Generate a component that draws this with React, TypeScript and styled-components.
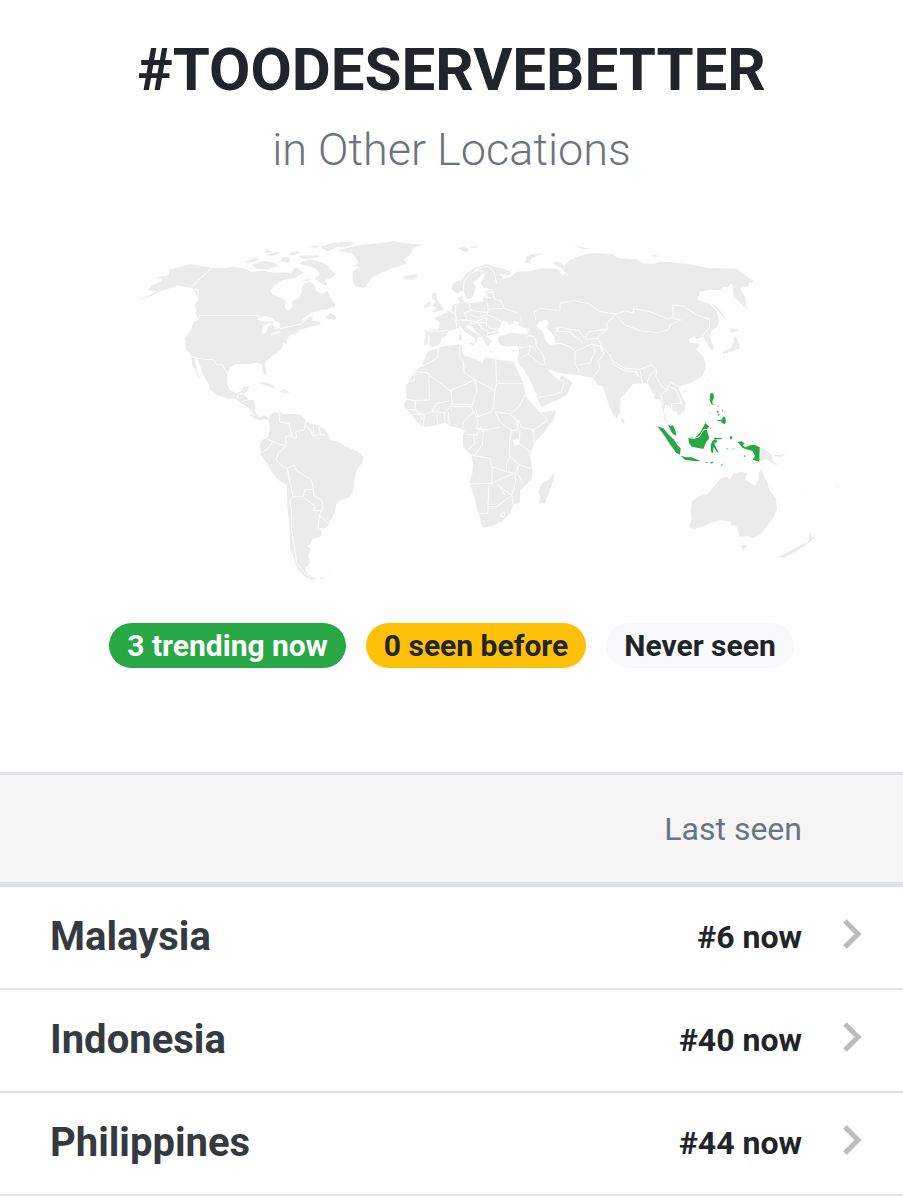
import styled, { createGlobalStyle } from "styled-components"

const GlobalStyle = createGlobalStyle`
	body {
		margin: 0;
		background: #fff;
		color: #212529;
		font-family: Roboto, "Liberation Sans", sans-serif;
	}
`

const Page = styled.main`
	width: 100%;
	overflow: hidden;
`

const Header = styled.header`
	padding-top: 33px;
	text-align: center;
`

const Title = styled.h1`
	margin: 0;
	font-size: 60px;
	line-height: 74px;
	font-weight: 700;
`

const Subtitle = styled.h2`
	margin: 16px 0 0;
	font-size: 45px;
	line-height: 54px;
	font-weight: 300;
	color: #6c757d;
`

const MapImage = styled.svg`
	display: block;
	width: 100%;
	margin-top: 43px;
`

const Legend = styled.div`
	display: flex;
	justify-content: center;
	gap: 20px;
	padding: 33px 0 104px;
`

const tones = {
	now: { background: "#28a745", color: "#fff" },
	before: { background: "#ffc107", color: "#212529" },
	never: { background: "#f8f9fa", color: "#212529" },
}

const Badge = styled.span<{ $tone: keyof typeof tones }>`
	padding: 0 18px;
	border-radius: 24px;
	font-size: 30px;
	line-height: 45px;
	font-weight: 700;
	white-space: nowrap;
	background: ${(props) => tones[props.$tone].background};
	color: ${(props) => tones[props.$tone].color};
`

const Table = styled.table`
	width: 100%;
	border-spacing: 0;
	border-top: 3px solid #dee2e6;
`

const HeadCell = styled.th`
	padding: 30px 0 29px;
	border-bottom: 5px solid #dee2e6;
	background: #f5f5f5;
	color: #6c757d;
	font-size: 32px;
	line-height: 48px;
	font-weight: 400;
	text-align: right;
`

const Cell = styled.td`
	padding: 26px 0 27px;
	border-bottom: 2px solid #dee2e6;
	line-height: 48px;
	vertical-align: middle;
`

const NameCell = styled(Cell)`
	padding-left: 50px;
`

const RankCell = styled(Cell)`
	font-size: 32px;
	font-weight: 700;
	text-align: right;
	white-space: nowrap;
`

const ArrowCell = styled(Cell)`
	width: 60px;
	padding: 32px 41px 39px 0;
`

const CountryLink = styled.a`
	display: block;
	color: #343a40;
	font-size: 40px;
	font-weight: 700;
	text-decoration: none;
`

const Chevron = styled.svg`
	display: block;
	margin-left: auto;
	fill: none;
	stroke: #bcbcbc;
	stroke-width: 5;
`

const Land = styled.path`
	fill: #ebebeb;
`

const Water = styled.path`
	fill: #fff;
`

const Border = styled.path`
	fill: none;
	stroke: #fff;
	stroke-width: 3;
	stroke-linejoin: round;
`

const Trending = styled.path`
	fill: #28a745;
`

const NorthAmerica = () => (
	<g transform="translate(90 230) scale(.33333)">
		<Land d="M172,180 L187,165 212,155 218,148 198,141 228,138 238,132 236,120 270,110 303,103 332,108 366,113 400,115 432,110 462,115 485,125 522,122 550,128 585,128 605,130 612,116 622,112 632,120 640,128 622,140 605,146 580,150 555,165 542,180 546,193 578,206 588,216 584,232 594,240 602,238 607,228 606,214 628,202 636,182 634,172 645,160 660,156 675,168 678,182 695,192 712,182 718,198 735,222 734,230 712,238 680,242 660,252 640,265 632,275 655,262 668,258 665,272 692,276 690,284 660,290 640,297 622,302 620,310 600,316 590,330 588,345 580,336 578,350 573,360 545,380 528,393 524,405 530,425 526,437 518,425 515,404 500,398 470,403 440,402 420,412 412,430 410,460 420,480 440,490 455,482 460,470 478,468 470,485 460,492 475,507 492,510 495,540 498,550 510,560 525,556 537,565 532,570 515,565 500,560 485,548 472,530 450,518 432,505 415,507 380,495 358,478 358,465 345,445 335,422 324,390 313,388 322,420 332,452 323,440 318,420 308,412 304,385 302,373 288,358 285,325 303,298 312,275 326,268 316,250 320,240 313,225 322,212 316,185 300,172 280,170 262,165 240,175 215,182 190,196 145,209 180,194 200,184Z" />
		<Land d="M463,96 L500,82 510,88 490,96Z M485,105 L520,92 555,100 565,108 535,118 500,116Z M525,75 L560,65 575,70 545,78Z M570,92 L580,80 600,85 595,100Z M590,72 L620,62 632,70 610,76Z M625,78 L685,76 690,82 640,86Z M655,50 L685,46 680,54Z M630,98 L660,88 690,95 712,105 722,120 738,132 725,145 706,150 712,168 695,162 675,148 688,132 680,118 660,108 635,106Z M690,50 L730,38 780,36 780,45 740,52 712,64Z M705,265 L722,248 740,262 735,270Z M642,152 L655,146 658,154Z M505,458 L525,455 560,472 545,474Z M568,483 L585,478 600,488 575,488Z M20,479 L24,480 22,484Z M530,58 L548,66 525,70Z" />
		<Water d="M500,268 L522,258 548,264 552,272 522,275Z M514,312 L518,290 536,278 548,285 534,290 528,308Z M549,270 L568,278 572,292 558,298 548,285Z M542,312 L568,302 572,307 545,316Z" />
		<Border d="M366,113 L300,175 325,180 322,215 M326,256 L500,256 540,275 572,295 632,282 655,262 M302,380 L340,388 370,388 382,405 395,402 412,430 M440,505 L448,490 460,492 M455,515 L478,508 492,510 M480,538 L497,538" />
	</g>
)

const SouthAmerica = () => (
	<g transform="translate(250 400) scale(.33333)">
		<Land d="M55,60 L60,45 75,36 85,40 90,33 100,42 130,42 150,43 165,58 180,72 205,76 225,88 235,105 240,120 270,128 290,140 325,155 340,170 338,188 320,210 313,240 308,275 298,292 268,302 258,315 255,335 242,360 232,380 218,386 205,382 214,392 215,408 188,416 182,432 170,438 180,445 175,470 182,485 170,500 165,510 175,522 200,538 185,540 165,530 145,510 135,485 125,455 120,440 118,380 112,310 110,255 85,240 68,220 45,180 30,165 33,150 28,140 35,120 55,110 60,80Z M0,0 L12,0 15,28 0,32Z M2,42 L15,48 30,55 42,48 56,62 45,56 30,61 12,54 0,46Z M208,534 L218,530 216,536Z M232,518 L240,513 236,518Z" />
		<Border d="M90,36 L88,65 118,72 125,105 107,110 108,138 80,130 48,115 M35,158 L55,145 68,125 M118,108 L140,115 138,95 162,90 170,60 M165,78 L182,90 188,108 210,103 228,106 M190,78 L190,105 M207,80 L212,104 M108,138 L85,160 78,180 100,200 112,205 M112,205 L133,195 140,212 185,240 190,265 M112,205 L118,240 130,290 120,300 125,340 125,390 135,450 140,490 165,520 180,530 M130,290 L158,290 165,270 190,268 192,288 215,300 220,322 208,345 204,385 M158,290 L195,318 192,332 214,332 M208,345 L236,370" />
	</g>
)

const Europe = () => (
	<g transform="translate(340 230) scale(.33333)">
		<Land d="M0,35 L45,38 20,50 0,50Z M-10,60 L20,55 45,47 100,41 160,34 215,42 250,43 222,55 210,75 190,88 200,100 178,108 150,118 125,128 105,138 90,148 78,170 70,174 45,167 38,150 38,125 58,112 40,107 55,100 48,85 35,70 10,66Z M188,138 L205,136 230,132 233,142 215,150 195,147Z M355,55 L372,51 388,58 378,68Z M385,50 L415,48 405,54Z M555,95 L560,80 575,73 608,68 578,80 568,90 574,104Z" />
		<Land d="M335,180 L337,160 365,150 380,130 405,113 440,102 462,110 470,150 460,172 432,174 422,160 435,138 430,128 410,150 400,158 408,172 400,195 390,208 380,206 370,182 350,190Z" />
		<Land d="M275,192 L284,188 292,195 290,208 302,225 313,236 300,244 276,246 290,234 278,228 286,212 276,205Z M253,226 L262,217 272,216 268,230 253,235Z" />
		<Land d="M462,110 L485,115 512,125 508,135 480,132 490,148 515,140 530,126 560,125 600,118 640,115 660,120 660,280 620,275 600,285 605,305 622,320 625,360 660,420 600,420 540,385 537,355 530,347 500,350 480,344 472,325 484,316 468,310 452,316 440,320 456,332 445,350 434,338 425,318 405,300 390,284 376,288 400,307 428,320 414,322 408,340 403,324 375,305 362,290 350,298 325,302 320,315 305,325 300,342 275,352 264,344 250,344 258,312 252,300 296,298 300,278 282,263 300,258 320,245 335,238 335,228 345,222 360,220 352,205 366,196 370,215 395,220 430,214 427,198 443,196 430,184 460,180 440,174Z M385,338 L403,340 400,348Z M355,315 L364,313 366,330 358,332Z M358,300 L363,298 363,310Z M448,362 L465,365 450,368Z M515,362 L526,358 520,366Z M358,212 L372,208 372,216Z" />
		<Water d="M476,314 L474,300 484,282 490,272 502,276 508,284 524,280 518,272 536,276 534,284 552,292 566,306 560,314 530,310 512,307 494,316Z" />
		<Border d="M370,182 L372,155 392,132 410,120 430,125 M405,118 L428,112 445,108 462,125 470,160 M430,185 L458,188 M428,200 L455,204 M458,182 L462,205 485,215 492,235 540,250 545,275 M445,238 L490,235 M440,215 L445,238 440,255 465,262 485,275 M388,220 L392,242 445,248 M392,242 L372,248 382,268 345,272 M348,225 L345,245 350,268 M325,240 L348,255 350,298 M258,302 L300,304 325,300 M260,312 L268,322 264,345 M365,270 L410,275 435,262 440,265 M390,255 L412,262 438,255 M385,282 L415,278 425,295 445,305 440,320 M415,278 L440,278 450,295 478,298 M440,262 L440,290 M445,310 L470,305 M560,295 L595,305 612,318 M565,315 L585,318 590,335 M580,318 L600,330 M535,352 L575,345 590,335 600,370 620,400 M540,385 L565,370 575,345 M565,370 L600,395 640,405" />
	</g>
)

const Africa = () => (
	<g transform="translate(395 340) scale(.33333)">
		<Land d="M95,40 L105,30 120,28 150,18 190,14 206,18 200,30 206,45 235,55 262,68 272,52 300,58 330,62 355,65 370,95 385,130 392,165 410,185 428,208 440,217 484,210 478,235 450,275 418,308 405,345 412,390 410,420 375,450 375,485 355,495 345,520 320,545 290,558 265,563 258,555 255,530 245,510 238,470 222,430 232,400 235,375 228,345 205,320 203,285 210,272 190,264 165,258 150,248 125,255 90,262 70,250 50,225 30,205 28,190 35,178 33,135 60,95 80,78Z M475,400 L478,415 450,490 432,490 436,470 430,455 440,430 460,420Z" />
		<Water d="M355,300 L370,298 375,312 358,318Z" />
		<Border d="M80,78 L105,68 128,52 130,28 M60,95 L95,98 165,152 240,120 208,98 205,65 192,45 195,15 M60,98 L58,120 35,130 M102,108 L103,180 60,182 35,178 M302,58 L305,130 383,130 M240,120 L300,150 305,130 M240,120 L245,150 232,195 172,192 168,152 M300,150 L296,200 290,215 250,230 240,205 M300,215 L345,222 360,210 372,200 390,165 425,205 M165,182 L125,190 110,215 85,225 60,210 62,182 M110,215 L150,218 172,192 M160,215 L163,255 M148,218 L150,248 M125,225 L128,250 M88,225 L85,258 M60,210 L30,208 M50,225 L70,220 85,240 M172,200 L230,200 236,215 205,245 203,265 M236,215 L250,240 245,265 270,270 315,262 M210,282 L245,285 260,260 M235,285 L240,310 220,330 M265,270 L262,315 240,345 228,345 M300,215 L315,245 350,272 370,270 365,240 345,222 M370,240 L380,262 415,270 460,240 425,205 M350,272 L343,310 345,350 335,370 335,395 290,380 285,355 255,350 232,345 M375,270 L372,310 405,335 M415,270 L418,308 M345,350 L375,375 408,385 M335,395 L365,400 370,375 M292,382 L290,430 222,432 M290,432 L330,410 360,400 362,425 350,465 355,495 M365,400 L380,420 M310,435 L348,465 M282,435 L278,520 248,520 M278,500 L305,500 350,467 M310,435 L330,465 M318,520 L330,517 328,530 316,528Z" />
	</g>
)

const Asia = () => (
	<g transform="translate(510 240) scale(.33333)">
		<Land d="M0,112 L20,95 50,95 100,85 140,95 160,105 168,98 155,85 125,68 150,65 162,78 180,60 210,48 250,38 305,42 325,55 380,58 400,70 430,72 450,65 480,66 550,75 600,85 640,85 680,87 705,105 735,126 715,130 718,138 690,145 705,170 710,206 690,190 670,165 668,135 662,130 655,142 640,140 630,150 595,150 570,155 562,180 598,190 620,215 628,245 620,262 605,272 598,288 612,325 606,334 590,310 580,290 558,298 555,288 538,296 540,308 572,312 558,328 580,350 588,375 578,408 550,425 525,435 505,440 512,462 528,490 524,512 505,528 500,516 484,510 480,498 465,495 462,515 470,540 480,552 464,542 460,515 452,480 435,476 425,450 412,428 395,430 370,432 350,455 332,475 330,515 320,537 305,515 288,470 280,440 262,435 250,415 205,405 168,402 150,400 125,390 105,370 112,388 128,405 145,418 158,406 165,410 188,428 170,465 130,485 92,502 85,480 60,430 22,362 28,330 45,312 66,284 60,262 30,225 0,200Z" />
		<Land d="M335,530 L345,545 340,552 334,545Z M592,425 L598,408 596,425Z M522,453 L530,450 526,458Z M50,70 L52,55 80,42 98,40 65,55Z M185,15 L245,28 220,28Z M425,44 L450,48 428,50Z M605,190 L625,205 655,245 635,228Z M660,264 L684,268 678,275 662,278Z M672,285 L682,298 690,325 665,335 635,342 642,332 662,325 672,308Z M638,348 L645,345 642,356Z" />
		<Water d="M78,260 L90,242 108,240 118,250 108,262 125,280 134,292 135,312 120,316 106,302 102,285 92,268Z M136,262 L144,264 145,276 138,272Z M28,378 L34,376 60,420 80,465 92,502 78,490 50,435Z" />
		<Border d="M78,240 L72,218 90,205 150,212 150,190 190,182 235,190 270,215 318,222 345,212 370,220 370,206 420,215 470,235 490,232 488,195 520,198 560,225 600,238 598,262 575,290 M318,226 L345,255 390,272 445,278 475,270 480,255 512,240 490,235 M318,222 L290,250 292,268 238,275 225,295 205,270 175,268 150,260 138,275 M135,312 L150,310 180,320 195,335 245,312 275,320 262,292 292,268 M145,275 L180,275 220,310 M225,298 L265,295 M195,335 L195,370 208,395 M205,375 L240,370 255,335 250,312 M270,320 L282,340 265,365 270,385 250,412 M275,320 L300,345 305,362 345,385 390,388 425,375 440,388 438,410 455,440 470,450 482,425 505,440 M305,370 L345,393 375,395 385,410 378,390 M390,388 L398,430 M410,430 L420,405 440,388 M470,450 L452,462 460,495 M480,440 L498,450 515,490 485,492 485,512 M50,288 L75,290 80,320 98,340 105,370 M28,325 L62,318 78,330 M62,318 L55,342 30,355 M55,342 L90,372 108,375 M85,472 L130,465 155,455 162,425 145,418" />
	</g>
)

const Oceania = () => (
	<g transform="translate(640 380) scale(.33333)">
		<Land d="M155,365 L175,350 205,340 225,315 242,295 260,290 270,297 280,280 305,275 322,280 315,298 345,318 355,300 358,275 365,268 370,285 382,305 388,330 408,355 411,385 402,410 375,445 360,465 335,475 322,468 298,470 292,445 285,435 275,438 270,425 240,420 205,432 185,440 160,447 148,440 155,415 152,390Z M302,497 L322,495 310,512Z M510,452 L517,470 525,472 500,494 508,475Z M495,490 L502,494 475,510 430,534 415,530Z M358,202 L378,210 395,225 398,240 415,257 395,250 380,235 358,246Z M400,225 L425,225 438,215 425,230 405,230Z M498,340 L510,344 500,344Z M590,315 L597,318 591,320Z" />
		<Trending d="M52,139 L70,145 82,160 103,180 112,195 122,205 120,224 108,218 88,190 72,165Z M84,134 L92,138 98,135 106,150 109,168 96,160Z M121,227 L140,232 155,232 168,238 183,243 165,244 135,239Z M145,174 L150,170 164,174 180,158 190,140 196,129 208,140 200,148 208,175 198,187 190,207 172,203 155,200 147,190Z M212,195 L217,182 228,178 232,185 223,190 226,198 236,218 230,216 221,200 219,220 213,215Z M221,173 L248,174 242,178 223,178Z M268,170 L274,168 278,174 272,179Z M293,186 L304,184 314,190 308,196 316,202 330,196 345,195 359,202 358,245 338,239 345,228 338,213 318,208 308,204Z M211,40 L220,40 222,54 217,64 218,71 228,75 214,73 209,60Z M228,94 L236,93 235,100Z M233,102 L239,101 237,109Z M244,86 L250,93 247,94Z M231,76 L236,78 234,80Z M232,120 L244,119 252,108 256,115 258,125 254,133 246,129 242,122 234,124Z M196,245 L205,246 198,249Z M210,246 L221,245 215,251Z M242,256 L251,250 245,258Z M272,208 L287,205 280,208Z M258,204 L265,207 260,208Z M312,224 L317,230 312,230Z M209,98 L212,97 210,101Z" />
		<Border d="M147,173 L162,175 178,170 186,157 192,148 206,149" />
	</g>
)

const WorldMap = () => (
	<MapImage viewBox="0 220 903 370" role="img" aria-label="World map of trending locations">
		<NorthAmerica />
		<SouthAmerica />
		<Europe />
		<Asia />
		<Africa />
		<Oceania />
	</MapImage>
)

interface Location {
	name: string
	rank: string
}

const locations: Location[] = [
	{ name: "Malaysia", rank: "#6 now" },
	{ name: "Indonesia", rank: "#40 now" },
	{ name: "Philippines", rank: "#44 now" },
]

const App = () => {
	return (
		<Page>
			<GlobalStyle />
			<Header>
				<Title>#TOODESERVEBETTER</Title>
				<Subtitle>in Other Locations</Subtitle>
			</Header>
			<WorldMap />
			<Legend>
				<Badge $tone="now">3 trending now</Badge>
				<Badge $tone="before">0 seen before</Badge>
				<Badge $tone="never">Never seen</Badge>
			</Legend>
			<Table>
				<thead>
					<tr>
						<HeadCell colSpan={2} scope="col">
							Last seen
						</HeadCell>
						<HeadCell as="td" />
					</tr>
				</thead>
				<tbody>
					{locations.map((location) => (
						<tr key={location.name}>
							<NameCell>
								<CountryLink href={`#${location.name.toLowerCase()}`}>{location.name}</CountryLink>
							</NameCell>
							<RankCell>{location.rank}</RankCell>
							<ArrowCell>
								<Chevron width="20" height="30" viewBox="0 0 20 30" aria-hidden="true">
									<path d="M3,2 L16,15 3,28" />
								</Chevron>
							</ArrowCell>
						</tr>
					))}
				</tbody>
			</Table>
		</Page>
	)
}

export default App
